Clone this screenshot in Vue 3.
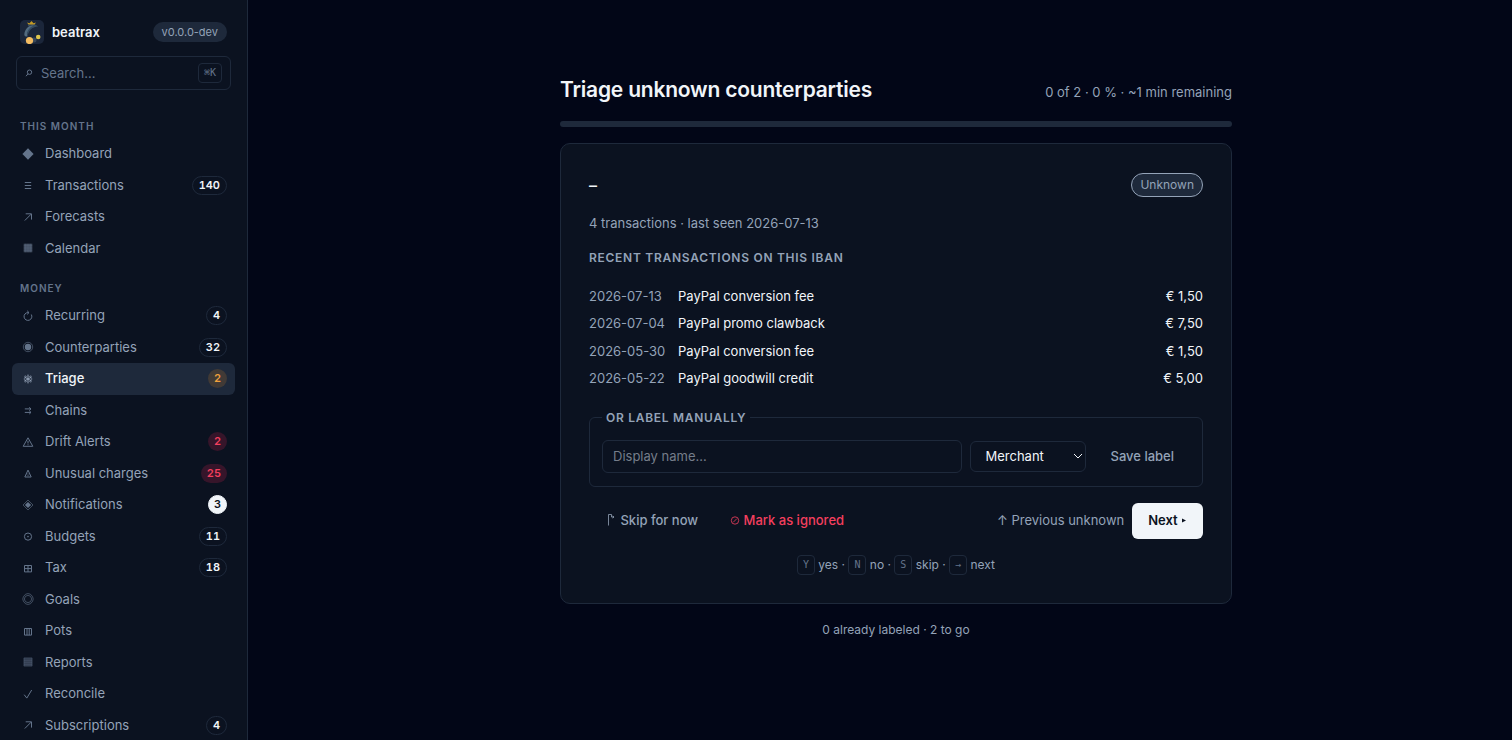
<script setup>
import { computed, ref } from 'vue';

const search = ref('');
const displayName = ref('');
const kind = ref('Merchant');

const labeled = ref(0);
const total = ref(2);
const progress = computed(() => Math.round((labeled.value / total.value) * 100));

// Each icon is a list of shapes on a 16x16 grid; `solid` shapes are filled.
const icons = {
  diamond: [{ d: 'M8 2.2 13.6 8 8 13.8 2.4 8Z', solid: true }],
  lines: [{ d: 'M4.8 5.5h6.4M4.8 8.5h6.4M4.8 11.5h6.4' }],
  arrow: [{ d: 'M4.8 11.5 11.2 5.1M5.7 4.8h5.8v5.8' }],
  calendar: [
    { d: 'M3.7 3.7h8.6v8.6H3.7Z', solid: true, dim: true },
    { d: 'M3.7 5.8h8.6M3.7 8h8.6M3.7 10.2h8.6M5.8 3.7v8.6M8 3.7v8.6M10.2 3.7v8.6', faint: true }
  ],
  recur: [{ d: 'M8.8 4.6H8A3.9 3.9 0 1 0 11.3 6.5M7.2 2.8 9 4.6 7.2 6.4' }],
  fisheye: [
    { d: 'M8 3.3a4.7 4.7 0 1 1 0 9.4 4.7 4.7 0 0 1 0-9.4Z', dim: true },
    { d: 'M8 4.8a3.2 3.2 0 1 1 0 6.4 3.2 3.2 0 0 1 0-6.4Z', solid: true }
  ],
  flower: [
    { d: 'M8 3.6v8.8M4.2 5.8l7.6 4.4M4.2 10.2l7.6-4.4' },
    { d: 'M5.4 4.6l1 1.4M10.6 4.6l-1 1.4M5.400 11.400l1-1.400M10.600 11.400l-1-1.400M3.800 8h1.600M10.600 8h1.600' }
  ],
  chains: [{ d: 'M4.8 6.9h6M4.8 10.4h6M9.3 5.3l1.7 1.6-1.7 1.5M9.3 8.8 11 10.4l-1.7 1.6' }],
  alert: [{ d: 'M8 3.8 12.8 12.3H3.2ZM8 6.7v2.8M8 10.3v.9' }],
  unusual: [
    { d: 'M8 5.1 11.2 12H4.8Z' },
    { d: 'M8 8.6a1.1 1.1 0 1 1 0 2.2 1.1 1.1 0 0 1 0-2.2Z', faint: true }
  ],
  bell: [
    { d: 'M8 3 13 8 8 13 3 8Z', dim: true },
    { d: 'M8 4.9 11.1 8 8 11.1 4.9 8Z', solid: true }
  ],
  budget: [
    { d: 'M8 5a3.6 3.6 0 1 1 0 7.2A3.6 3.6 0 0 1 8 5Z' },
    { d: 'M8 7.8a.8.8 0 1 1 0 1.6.8.8 0 0 1 0-1.6Z', solid: true }
  ],
  tax: [{ d: 'M4.5 5.5h7v6.4h-7ZM8 5.5v6.4M4.5 8.6h7' }],
  goal: [
    { d: 'M5.6 3.2 8 2.6l2.4.6 2.2 2.4.6 2.4-.6 2.4-2.2 2.4-2.4.6-2.4-.6-2.2-2.4L2.8 8l.6-2.4Z', dim: true },
    { d: 'M8 4.4a3.6 3.6 0 1 1 0 7.2 3.6 3.6 0 0 1 0-7.2Z', dim: true }
  ],
  pots: [{ d: 'M4.5 5.5h7v6.6h-7ZM7 5.5v6.6M9.2 5.5v6.6' }],
  report: [
    { d: 'M3.9 3.9h8.2v8.2H3.9Z', solid: true, faint: true },
    { d: 'M3.9 3.9h8.2v8.2H3.9ZM4 6.2h8M4 8.2h8M4 10.2h8', faint: true }
  ],
  check: [{ d: 'M4.2 8.7 6.8 12.1 11.7 4' }]
};

const sections = [
  {
    title: 'This month',
    items: [
      { label: 'Dashboard', icon: 'diamond' },
      { label: 'Transactions', icon: 'lines', count: 140 },
      { label: 'Forecasts', icon: 'arrow' },
      { label: 'Calendar', icon: 'calendar' }
    ]
  },
  {
    title: 'Money',
    items: [
      { label: 'Recurring', icon: 'recur', count: 4 },
      { label: 'Counterparties', icon: 'fisheye', count: 32 },
      { label: 'Triage', icon: 'flower', count: 2, tone: 'warn', active: true },
      { label: 'Chains', icon: 'chains' },
      { label: 'Drift Alerts', icon: 'alert', count: 2, tone: 'danger' },
      { label: 'Unusual charges', icon: 'unusual', count: 25, tone: 'danger' },
      { label: 'Notifications', icon: 'bell', count: 3, tone: 'solid' },
      { label: 'Budgets', icon: 'budget', count: 11 },
      { label: 'Tax', icon: 'tax', count: 18 },
      { label: 'Goals', icon: 'goal' },
      { label: 'Pots', icon: 'pots' },
      { label: 'Reports', icon: 'report' },
      { label: 'Reconcile', icon: 'check' },
      { label: 'Subscriptions', icon: 'arrow', count: 4 }
    ]
  }
];

const transactions = [
  { date: '2026-07-13', text: 'PayPal conversion fee', amount: '€ 1,50' },
  { date: '2026-07-04', text: 'PayPal promo clawback', amount: '€ 7,50' },
  { date: '2026-05-30', text: 'PayPal conversion fee', amount: '€ 1,50' },
  { date: '2026-05-22', text: 'PayPal goodwill credit', amount: '€ 5,00' }
];
</script>

<template>
  <div class="shell">
    <aside class="sidebar">
      <div class="brand">
        <svg class="logo" viewBox="0 0 24 24" aria-hidden="true">
          <rect width="24" height="24" rx="5" fill="#1b263a" />
          <path d="M15 4.5C8.5 5 4.5 9 4.3 15c.8 1.5 2 1.8 3.2 1.2C6.8 12 9.5 8.5 15.5 6.5Z" fill="#526a7e" />
          <path d="M8 5.5c3-1 6-1 8 .5-4 .4-7 3-8.5 7.5" fill="none" stroke="#344b61" stroke-width="1.6" />
          <path d="M7 2.5 9.5 3.2 11.5 1 13.5 3.2 16 2.5 14.5 4.5h-6Z" fill="#c39a24" />
          <circle cx="14" cy="20" r="2.5" fill="#394858" />
          <circle cx="9.5" cy="20.5" r="3.6" fill="#f5bd62" />
          <circle cx="18.2" cy="17" r="2.3" fill="#dec64c" />
        </svg>
        <span class="brand-name">beatrax</span>
        <span class="version">v0.0.0-dev</span>
      </div>

      <label class="search">
        <svg class="search-icon" viewBox="0 0 8 8" aria-hidden="true">
          <circle cx="4.5" cy="3.2" r="2.2" />
          <path d="M3 4.8 1 7.2" />
        </svg>
        <input v-model="search" type="text" placeholder="Search…" aria-label="Search" />
        <kbd>⌘K</kbd>
      </label>

      <nav>
        <section v-for="section in sections" :key="section.title" class="nav-section">
          <h2 class="nav-title">{{ section.title }}</h2>
          <a
            v-for="item in section.items"
            :key="item.label"
            href="#"
            class="nav-item"
            :class="{ active: item.active }"
          >
            <svg class="nav-icon" viewBox="0 0 16 16" aria-hidden="true">
              <path
                v-for="(shape, i) in icons[item.icon]"
                :key="i"
                :d="shape.d"
                :class="{ solid: shape.solid, dim: shape.dim, faint: shape.faint }"
              />
            </svg>
            <span class="nav-label">{{ item.label }}</span>
            <span v-if="item.count" class="count" :class="item.tone">{{ item.count }}</span>
          </a>
        </section>
      </nav>
    </aside>

    <main class="main">
      <div class="triage">
        <header class="head">
          <h1>Triage unknown counterparties</h1>
          <span class="status">{{ labeled }} of {{ total }} · {{ progress }} % · ~1 min remaining</span>
        </header>

        <div class="progress" role="progressbar" :aria-valuenow="progress" aria-label="Triage progress">
          <div class="progress-fill" :style="{ width: progress + '%' }"></div>
        </div>

        <article class="card">
          <div class="card-head">
            <strong class="party">–</strong>
            <span class="badge">Unknown</span>
          </div>
          <p class="meta">4 transactions · last seen 2026-07-13</p>

          <h2 class="subhead">Recent transactions on this IBAN</h2>
          <table class="tx">
            <tbody>
              <tr v-for="tx in transactions" :key="tx.date">
                <td class="tx-date">{{ tx.date }}</td>
                <td>{{ tx.text }}</td>
                <td class="tx-amount">{{ tx.amount }}</td>
              </tr>
            </tbody>
          </table>

          <fieldset class="manual">
            <legend>Or label manually</legend>
            <div class="manual-row">
              <input v-model="displayName" type="text" placeholder="Display name…" aria-label="Display name" />
              <div class="select">
                <select v-model="kind" aria-label="Kind">
                  <option>Merchant</option>
                  <option>Person</option>
                  <option>Employer</option>
                </select>
                <svg viewBox="0 0 10 6" aria-hidden="true"><path d="M1 1l4 4 4-4" /></svg>
              </div>
              <button type="button" class="btn">Save label</button>
            </div>
          </fieldset>

          <div class="actions">
            <div class="actions-left">
              <button type="button" class="btn">
                <svg class="skip-icon" viewBox="0 0 12 12" aria-hidden="true">
                  <path d="M3.5 11.5V.5h3M6.5.5V3h2.5M7.500 2l1.500 1-1.500 1" />
                </svg>
                Skip for now
              </button>
              <button type="button" class="btn danger">
                <svg class="ignore-icon" viewBox="0 0 10 12" aria-hidden="true">
                  <circle cx="5" cy="6.5" r="3.7" />
                  <path d="M3.2 8.3 6.8 4.7" />
                </svg>
                Mark as ignored
              </button>
            </div>
            <a href="#" class="previous">↑ Previous unknown</a>
            <button type="button" class="btn primary">
              Next
              <svg class="next-icon" viewBox="0 0 6 12" aria-hidden="true"><path d="M1 4.5 5 6.5 1 8.5Z" /></svg>
            </button>
          </div>

          <p class="hints">
            <kbd>Y</kbd> yes · <kbd>N</kbd> no · <kbd>S</kbd> skip · <kbd>→</kbd> next
          </p>
        </article>

        <p class="foot">{{ labeled }} already labeled · {{ total - labeled }} to go</p>
      </div>
    </main>
  </div>
</template>

<style>
body {
  margin: 0;
  background: #020617;
  overflow: hidden;
}
</style>

<style scoped>
.shell {
  display: flex;
  height: 100vh;
  font-family: Inter, "Liberation Sans", sans-serif;
  font-size: 13px;
  line-height: 1.5;
  color: #f1f5f9;
}

.shell * {
  box-sizing: border-box;
}

h1,
h2,
p {
  margin: 0;
}

input,
select,
button {
  font: inherit;
  color: inherit;
}

kbd {
  font-family: "DejaVu Sans Mono", monospace;
  border: 1px solid #1e293b;
  border-radius: 4px;
  color: #64748b;
}

.sidebar {
  flex: none;
  width: 248px;
  padding: 20px 12px 0;
  overflow: hidden;
  background: #0b1220;
  border-right: 1px solid #1e293b;
}

.brand {
  display: flex;
  align-items: center;
  gap: 8px;
  height: 24px;
  padding: 0 8px;
}

.logo {
  width: 24px;
  height: 24px;
}

.brand-name {
  flex: 1;
  font-weight: 600;
  line-height: 20px;
}

.version {
  padding: 0 9px;
  border-radius: 999px;
  background: #1e293b;
  color: #94a3b8;
  font-size: 11px;
  line-height: 20px;
}

.search {
  display: flex;
  align-items: center;
  gap: 8px;
  height: 34px;
  margin: 12px 4px 28px;
  padding: 0 8px;
  border: 1px solid #1e293b;
  border-radius: 6px;
}

.search-icon {
  width: 8px;
  height: 8px;
  fill: none;
  stroke: #64748b;
}

.search input {
  flex: 1;
  min-width: 0;
  height: 32px;
  padding: 0;
  border: 0;
  outline: 0;
  background: none;
}

.search input::placeholder {
  color: #64748b;
  opacity: 1;
}

.search kbd {
  padding: 0 5px;
  font-size: 10px;
  line-height: 18px;
}

.nav-section + .nav-section {
  margin-top: 16px;
}

.nav-title {
  margin-bottom: 4px;
  padding: 0 8px;
  color: #64748b;
  font-size: 10px;
  font-weight: 600;
  line-height: 16px;
  letter-spacing: 0.1em;
  text-transform: uppercase;
}

.nav-item {
  display: flex;
  align-items: center;
  gap: 9px;
  padding: 6px 8px;
  border-radius: 6px;
  color: #94a3b8;
  text-decoration: none;
}

.nav-item.active {
  background: #1e293b;
  color: #f1f5f9;
  font-weight: 500;
}

.nav-icon {
  width: 16px;
  height: 16px;
  fill: none;
  stroke: #64748b;
}

.nav-item.active .nav-icon {
  stroke: #94a3b8;
}

.nav-icon .solid {
  fill: #64748b;
  stroke: none;
}

.nav-icon .dim {
  opacity: 0.6;
}

.nav-icon .faint {
  opacity: 0.4;
}

.nav-label {
  flex: 1;
}

.count {
  margin: -1px 0;
  padding: 0 6px;
  border: 1px solid #1e293b;
  border-radius: 999px;
  color: #f1f5f9;
  font-size: 11px;
  font-weight: 600;
  font-variant-numeric: tabular-nums;
  line-height: 17px;
}

.count.warn {
  border-color: transparent;
  background: #413a36;
  color: #f0a03c;
}

.count.danger {
  border-color: transparent;
  background: #36152a;
  color: #f43f5e;
}

.count.solid {
  border-color: #f1f5f9;
  background: #f1f5f9;
  color: #0b1220;
}

.count.warn,
.count.danger,
.count.solid {
  padding: 0 5px;
}

.main {
  flex: 1;
  padding: 75px 0 0 32px;
}

.triage {
  max-width: 672px;
  margin: 0 auto;
}

.head {
  display: flex;
  align-items: baseline;
  justify-content: space-between;
}

h1 {
  font-size: 21px;
  font-weight: 600;
  line-height: 30px;
  letter-spacing: -0.01em;
}

.status {
  color: #94a3b8;
}

.progress {
  height: 6px;
  margin: 16px 0;
  overflow: hidden;
  border-radius: 3px;
  background: #1e293b;
}

.progress-fill {
  height: 100%;
  background: #f1f5f9;
}

.card {
  padding: 28px;
  border: 1px solid #1e293b;
  border-radius: 10px;
  background: #0b1220;
}

.card-head {
  display: flex;
  align-items: center;
  justify-content: space-between;
  height: 26px;
}

.party {
  font-size: 16px;
  font-weight: 500;
}

.badge {
  padding: 0 8px;
  border: 1px solid #94a3b8;
  border-radius: 999px;
  background: #1e293b;
  color: #94a3b8;
  font-size: 12px;
  line-height: 22px;
}

.meta {
  margin-top: 16px;
  color: #94a3b8;
}

.subhead {
  margin: 15px 0 16px;
  color: #94a3b8;
  font-size: 12px;
  font-weight: 600;
  line-height: 18px;
  letter-spacing: 0.06em;
  text-transform: uppercase;
}

.tx {
  width: 100%;
  border-collapse: collapse;
}

.tx td {
  padding: 4px 0;
}

.tx .tx-date {
  width: 89px;
  color: #94a3b8;
  white-space: nowrap;
}

.tx .tx-amount {
  text-align: right;
}

.manual {
  margin: 16px 0;
  padding: 12px;
  border: 1px solid #1e293b;
  border-radius: 6px;
}

.manual legend {
  padding: 0 4px;
  color: #94a3b8;
  font-size: 12px;
  font-weight: 600;
  line-height: 18px;
  letter-spacing: 0.06em;
  text-transform: uppercase;
}

.manual-row {
  display: flex;
  align-items: center;
  gap: 8px;
}

.manual-row input {
  flex: 1;
  min-width: 0;
  height: 33px;
  padding: 0 10px;
  border: 1px solid #1e293b;
  border-radius: 6px;
  background: none;
}

.manual-row input::placeholder {
  color: #757d8a;
  opacity: 1;
}

.select {
  position: relative;
}

.select select {
  display: block;
  width: 116px;
  height: 31px;
  padding: 0 14px;
  border: 1px solid #1e293b;
  border-radius: 6px;
  background: #0b1220;
  appearance: none;
}

.select svg {
  position: absolute;
  top: 12px;
  right: 3px;
  width: 10px;
  height: 6px;
  fill: none;
  stroke: #f1f5f9;
  pointer-events: none;
}

.btn {
  padding: 8px 16px;
  border: 0;
  border-radius: 6px;
  background: none;
  color: #94a3b8;
  font-weight: 500;
}

.btn svg {
  fill: none;
  stroke: currentColor;
  stroke-width: 0.8;
  vertical-align: -1px;
}

.skip-icon {
  width: 12px;
  height: 12px;
}

.ignore-icon {
  width: 10px;
  height: 12px;
}

.actions,
.actions-left {
  display: flex;
  align-items: center;
}

.actions {
  gap: 8px;
}

.btn.danger {
  color: #f43f5e;
}

.previous {
  margin-left: auto;
  color: #94a3b8;
  text-decoration: none;
}

.btn.primary {
  background: #f1f5f9;
  color: #0b1220;
  font-weight: 600;
}

.btn .next-icon {
  width: 6px;
  height: 12px;
  fill: currentColor;
  stroke: none;
}

.hints {
  margin-top: 16px;
  color: #94a3b8;
  font-size: 12px;
  line-height: 20px;
  text-align: center;
}

.hints kbd {
  display: inline-block;
  padding: 0 5px;
  font-size: 10px;
  line-height: 18px;
  vertical-align: middle;
}

.foot {
  margin-top: 16px;
  color: #94a3b8;
  font-size: 12px;
  line-height: 20px;
  text-align: center;
}
</style>
